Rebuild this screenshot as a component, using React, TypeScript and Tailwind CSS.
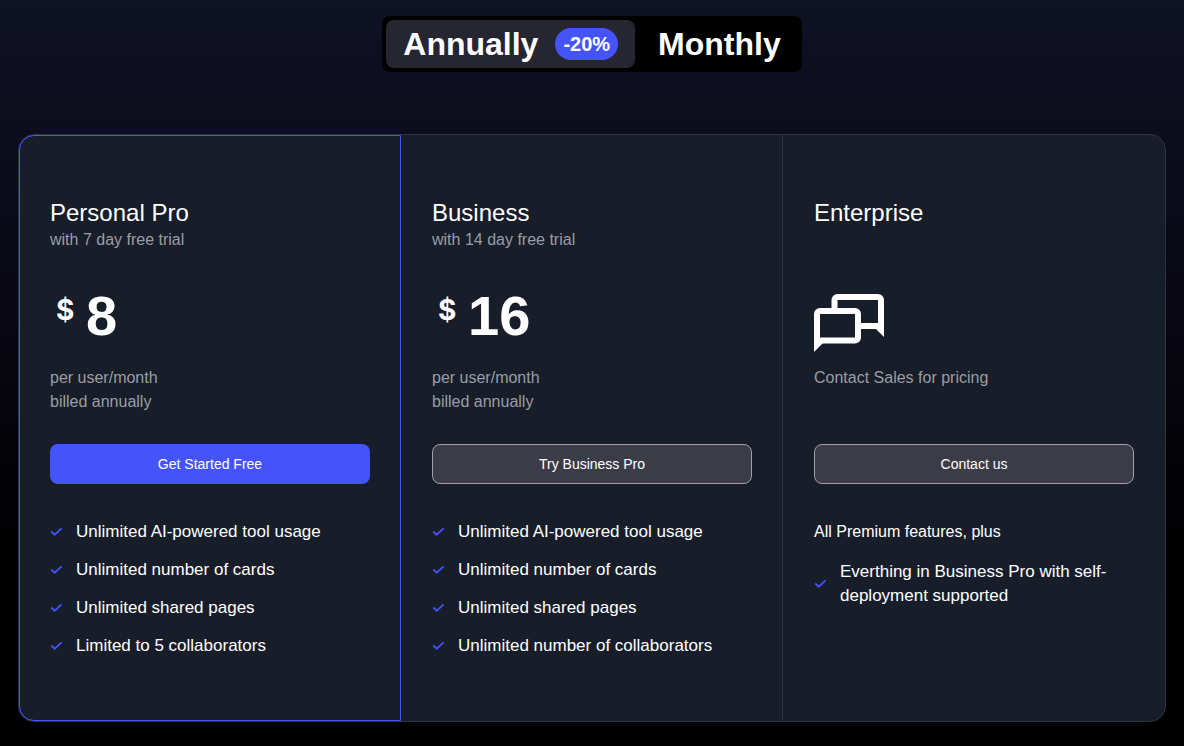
import { useState } from 'react';

type Plan = {
  id: string;
  name: string;
  trial?: string;
  price?: string;
  note: string[];
  cta: string;
  intro?: string;
  features: string[];
};

const PLANS: Plan[] = [
  {
    id: 'personal',
    name: 'Personal Pro',
    trial: 'with 7 day free trial',
    price: '8',
    note: ['per user/month', 'billed annually'],
    cta: 'Get Started Free',
    features: [
      'Unlimited AI-powered tool usage',
      'Unlimited number of cards',
      'Unlimited shared pages',
      'Limited to 5 collaborators',
    ],
  },
  {
    id: 'business',
    name: 'Business',
    trial: 'with 14 day free trial',
    price: '16',
    note: ['per user/month', 'billed annually'],
    cta: 'Try Business Pro',
    features: [
      'Unlimited AI-powered tool usage',
      'Unlimited number of cards',
      'Unlimited shared pages',
      'Unlimited number of collaborators',
    ],
  },
  {
    id: 'enterprise',
    name: 'Enterprise',
    note: ['Contact Sales for pricing'],
    cta: 'Contact us',
    intro: 'All Premium features, plus',
    features: ['Everthing in Business Pro with self-deployment supported'],
  },
];

function CheckIcon() {
  return (
    <svg className="size-[14px] shrink-0" viewBox="0 0 14 14" fill="none" stroke="#4353ff" strokeWidth="1.8" aria-hidden="true">
      <path d="M1.300 6.500L4.700 9.700L11.600 3.300" />
    </svg>
  );
}

function ChatIcon() {
  return (
    <svg width="70" height="58" viewBox="0 0 70 58" fill="none" stroke="#fff" strokeWidth="6" aria-hidden="true">
      <path d="M20.500 17V6a3 3 0 0 1 3-3H64a3 3 0 0 1 3 3V32H44" />
      <path d="M60 33L70 43V30Z" fill="#fff" stroke="none" />
      <path d="M3 46.500V20a3 3 0 0 1 3-3H41a3 3 0 0 1 3 3V43.500a3 3 0 0 1-3 3Z" />
      <path d="M0 44V58L10 48Z" fill="#fff" stroke="none" />
    </svg>
  );
}

function PlanCard({ plan, selected }: { plan: Plan; selected: boolean }) {
  return (
    <article
      className={
        selected
          ? 'px-[30px] pt-15 pb-[62px] border border-[#4353ff] rounded-l-[15px]'
          : 'px-[30px] pt-15 pb-[62px] border border-transparent not-last:border-r-[#2e3440]'
      }
    >
      <header className="h-[60px]">
        <h2 className="text-2xl leading-[34px]">{plan.name}</h2>
        {plan.trial && <p className="leading-5 text-[#9a9da3]">{plan.trial}</p>}
      </header>

      <div className="h-[72px] mt-[38px]">
        {plan.price ? (
          <p className="flex items-start font-bold">
            <span className="w-9 pl-[6px] font-['Inter',sans-serif] text-[28px] leading-8">$</span>
            <span className="text-[56px] leading-[44px]">{plan.price}</span>
          </p>
        ) : (
          <ChatIcon />
        )}
      </div>

      <div className="h-[78px] leading-6 text-[#9a9da3]">
        {plan.note.map((line) => (
          <p key={line}>{line}</p>
        ))}
      </div>

      <button
        type="button"
        className={
          selected
            ? 'block w-full h-10 rounded-lg text-sm bg-[#4554fa]'
            : 'block w-full h-10 rounded-lg text-sm bg-[#3c3c49] border border-[#a0a1a7]'
        }
      >
        {plan.cta}
      </button>

      <div className="mt-9 text-[17px] leading-6">
        {plan.intro && <p className="mb-4 text-base">{plan.intro}</p>}
        <ul className="flex flex-col gap-[14px]">
          {plan.features.map((feature) => (
            <li key={feature} className="flex items-center gap-3">
              <CheckIcon />
              <span>{feature}</span>
            </li>
          ))}
        </ul>
      </div>
    </article>
  );
}

export default function App() {
  const [billing, setBilling] = useState('annually');

  return (
    <main className="min-h-screen pt-4 pb-6 px-[18px] text-white font-['Liberation_Sans',Arial,sans-serif] bg-linear-to-b from-[#0f1225] via-[#07060f] to-black">
      <div className="flex w-fit mx-auto p-1 rounded-lg bg-black text-[32px] leading-10 font-bold">
        <button
          type="button"
          aria-pressed={billing === 'annually'}
          onClick={() => setBilling('annually')}
          className="flex items-center gap-[17px] h-12 px-[17px] rounded-lg aria-pressed:bg-[#262631]"
        >
          Annually
          <span className="h-8 px-2 rounded-full bg-[#4554fa] text-xl leading-8">-20%</span>
        </button>
        <button
          type="button"
          aria-pressed={billing === 'monthly'}
          onClick={() => setBilling('monthly')}
          className="h-12 pl-[23px] pr-[17px] rounded-lg aria-pressed:bg-[#262631]"
        >
          Monthly
        </button>
      </div>

      <section className="grid grid-cols-3 mt-[62px] border border-[#2e3440] rounded-2xl bg-[#181d2a]">
        {PLANS.map((plan) => (
          <PlanCard key={plan.id} plan={plan} selected={plan.id === 'personal'} />
        ))}
      </section>
    </main>
  );
}
